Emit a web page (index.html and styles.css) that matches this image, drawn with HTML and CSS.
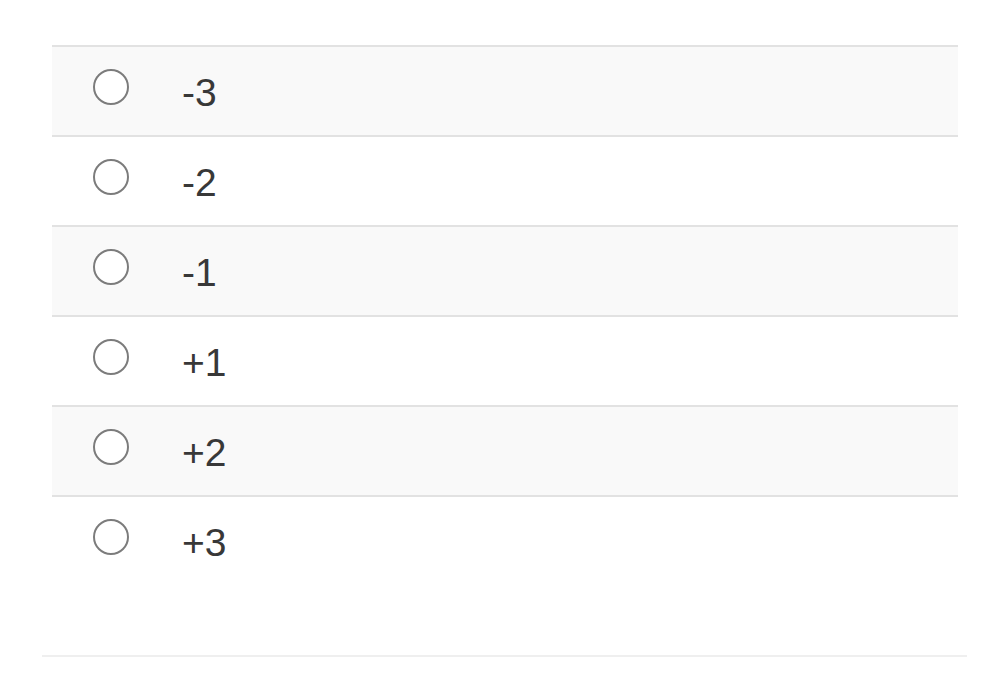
FILE: index.html
```html
<!DOCTYPE html>
<html lang="en">
<head>
    <meta charset="UTF-8">
    <meta name="viewport" content="width=device-width, initial-scale=1.0">
    <title>Scale</title>
    <link rel="stylesheet" href="styles.css">
</head>
<body>
    <div class="page">
        <div class="options">
            <label class="option striped"><span class="radio"></span><span class="label">-3</span></label>
            <label class="option"><span class="radio"></span><span class="label">-2</span></label>
            <label class="option striped"><span class="radio"></span><span class="label">-1</span></label>
            <label class="option"><span class="radio"></span><span class="label">+1</span></label>
            <label class="option striped"><span class="radio"></span><span class="label">+2</span></label>
            <label class="option"><span class="radio"></span><span class="label">+3</span></label>
        </div>
        <div class="footer-line"></div>
    </div>
</body>
</html>
```

FILE: styles.css
```css
body {
    margin: 0;
    background: #ffffff;
    font-family: 'Liberation Sans', Arial, sans-serif;
    color: #333333;
}

.page {
    width: 1000px;
    height: 680px;
    padding-top: 45px;
    box-sizing: border-box;
    overflow: hidden;
}

.options {
    margin: 0 42px 0 52px;
    display: flex;
    flex-direction: column;
}

.option {
    display: flex;
    align-items: flex-start;
    height: 88px;
    border-top: 2px solid #e2e2e2;
    cursor: pointer;
}

.option.striped {
    background-color: #f9f9f9;
}

.radio {
    width: 32px;
    height: 32px;
    margin: 22px 0 0 41px;
    border: 2.5px solid #7c7c7c;
    border-radius: 50%;
    background: #ffffff;
    flex-shrink: 0;
}

.label {
    margin: 24px 0 0 53px;
    font-size: 39px;
    line-height: 44px;
    color: #383838;
}

.footer-line {
    margin: 70px 33px 0 42px;
    height: 2px;
    background-color: #efefef;
}
```
